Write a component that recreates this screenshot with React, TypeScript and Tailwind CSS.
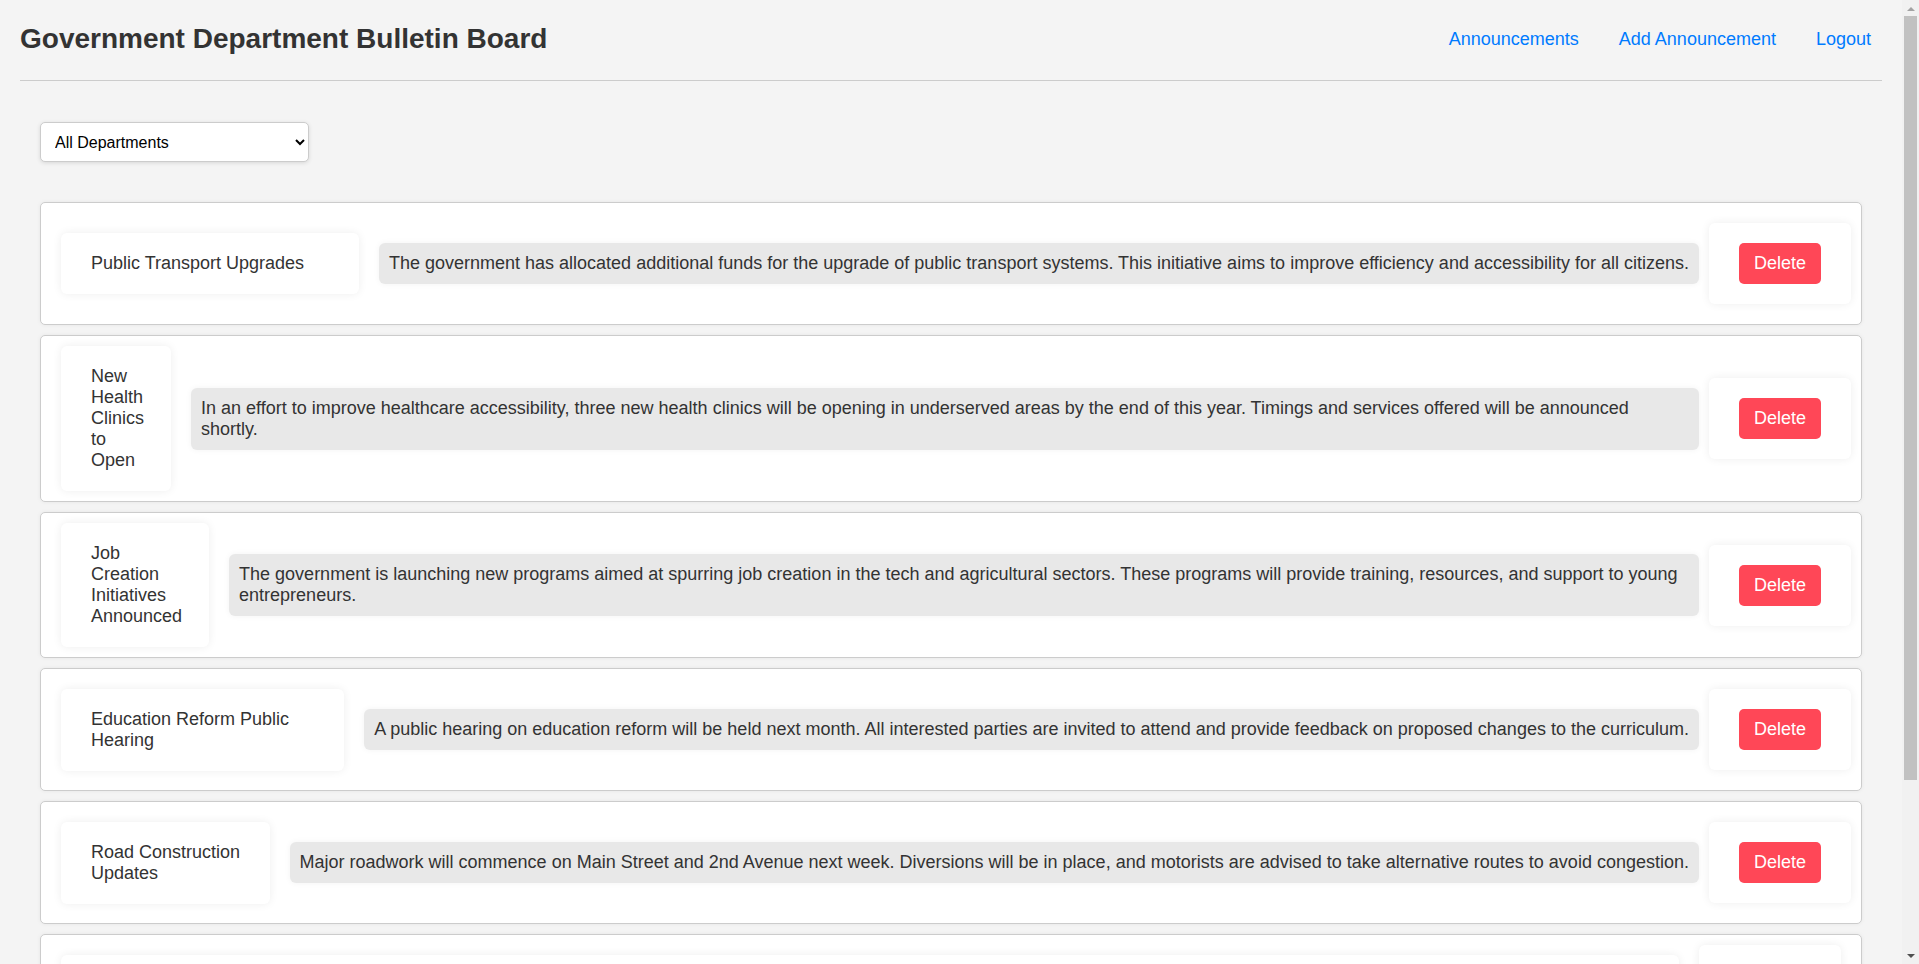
import React, { useState } from 'react';

interface Announcement {
  id: number;
  title: string;
  content: string;
  department: string;
}

const initialAnnouncements: Announcement[] = [
  {
    id: 1,
    title: 'Public Transport Upgrades',
    content:
      'The government has allocated additional funds for the upgrade of public transport systems. This initiative aims to improve efficiency and accessibility for all citizens.',
    department: 'Transport',
  },
  {
    id: 2,
    title: 'New Health Clinics to Open',
    content:
      'In an effort to improve healthcare accessibility, three new health clinics will be opening in underserved areas by the end of this year. Timings and services offered will be announced shortly.',
    department: 'Health',
  },
  {
    id: 3,
    title: 'Job Creation Initiatives Announced',
    content:
      'The government is launching new programs aimed at spurring job creation in the tech and agricultural sectors. These programs will provide training, resources, and support to young entrepreneurs.',
    department: 'Labour',
  },
  {
    id: 4,
    title: 'Education Reform Public Hearing',
    content:
      'A public hearing on education reform will be held next month. All interested parties are invited to attend and provide feedback on proposed changes to the curriculum.',
    department: 'Education',
  },
  {
    id: 5,
    title: 'Road Construction Updates',
    content:
      'Major roadwork will commence on Main Street and 2nd Avenue next week. Diversions will be in place, and motorists are advised to take alternative routes to avoid congestion.',
    department: 'Transport',
  },
];

export default function App() {
  const [announcements, setAnnouncements] = useState<Announcement[]>(initialAnnouncements);
  const [department, setDepartment] = useState('All');

  const handleDelete = (id: number) => {
    setAnnouncements((prev) => prev.filter((a) => a.id !== id));
  };

  const visible = announcements.filter((a) => department === 'All' || a.department === department);

  return (
    <div className="flex h-screen overflow-hidden bg-[#f4f4f4] font-['Liberation_Sans',Arial,sans-serif] text-[#333]">
      <div className="min-w-0 flex-1 overflow-y-auto">
        {/* Header */}
        <header className="mx-[20px] flex items-center justify-between border-b border-[#ccc] pt-[23px] pb-[25px]">
          <h1 className="text-[28px] font-bold leading-[32px] text-[#333]">Government Department Bulletin Board</h1>
          <nav className="flex items-center gap-[40px] pr-[11px] text-[18px] leading-[21px] text-[#007bff]">
            <a href="#">Announcements</a>
            <a href="#">Add Announcement</a>
            <a href="#">Logout</a>
          </nav>
        </header>

        <main className="px-[40px] pt-[41px] pb-[20px]">
          {/* Filter */}
          <select
            value={department}
            onChange={(e) => setDepartment(e.target.value)}
            className="h-[40px] w-[269px] rounded-[5px] border border-[#ccc] bg-white pl-[10px] text-[16px] text-black shadow-[0_1px_4px_rgba(0,0,0,0.12)]"
          >
            <option value="All">All Departments</option>
            <option value="Transport">Transport</option>
            <option value="Health">Health</option>
            <option value="Labour">Labour</option>
            <option value="Education">Education</option>
          </select>

          {/* Announcement list */}
          <div className="mt-[40px] flex flex-col gap-[10px] text-[18px] leading-[21px]">
            {visible.map((item) => (
              <div
                key={item.id}
                className="flex items-center rounded-[5px] border border-[#ccc] bg-white p-[10px] shadow-[0_0_4px_rgba(0,0,0,0.06)]"
              >
                <div className="mx-[10px] flex-1 rounded-[6px] bg-white py-[20px] pl-[30px] pr-[27px] shadow-[0_0_10px_rgba(0,0,0,0.07)]">
                  {item.title}
                </div>
                <div className="mx-[10px] rounded-[6px] bg-[#e8e8e8] p-[10px] shadow-[0_0_6px_rgba(0,0,0,0.05)]">
                  {item.content}
                </div>
                <div className="my-[10px] rounded-[6px] bg-white px-[30px] py-[20px] shadow-[0_0_10px_rgba(0,0,0,0.07)]">
                  <button
                    onClick={() => handleDelete(item.id)}
                    className="rounded-[5px] bg-[#ff4757] px-[15px] py-[10px] text-white"
                  >
                    Delete
                  </button>
                </div>
              </div>
            ))}

            {/* Longer entry, stacked */}
            <div className="flex items-start rounded-[5px] border border-[#ccc] bg-white p-[10px] shadow-[0_0_4px_rgba(0,0,0,0.06)]">
              <div className="mx-[10px] mt-[10px] flex flex-1 flex-col gap-[20px]">
                <div className="rounded-[6px] bg-white px-[30px] py-[20px] shadow-[0_0_10px_rgba(0,0,0,0.07)]">
                  Community Water Conservation Program
                </div>
                <div className="rounded-[6px] bg-[#e8e8e8] p-[10px] shadow-[0_0_6px_rgba(0,0,0,0.05)]">
                  Residents are encouraged to take part in the upcoming consultation sessions on the new water usage guidelines. Sessions will be held at the community centre every Saturday throughout the month.
                </div>
              </div>
              <div className="ml-[10px] mr-[10px] rounded-[6px] bg-white px-[30px] py-[20px] shadow-[0_0_10px_rgba(0,0,0,0.07)]">
                <button className="rounded-[5px] bg-[#ff4757] px-[15px] py-[10px] text-white">Delete</button>
              </div>
            </div>
          </div>
        </main>
      </div>

      {/* Window scrollbar */}
      <div className="flex w-[17px] shrink-0 flex-col bg-[#f1f1f1]">
        <div className="flex h-[16px] items-center justify-center">
          <svg width="8" height="5" viewBox="0 0 8 5">
            <path d="M0 5 L4 1 L8 5 Z" fill="#a3a3a3" />
          </svg>
        </div>
        <div className="mx-[2px] h-[764px] bg-[#c1c1c1]" />
        <div className="flex-1" />
        <div className="flex h-[16px] items-center justify-center">
          <svg width="8" height="5" viewBox="0 0 8 5">
            <path d="M0 0 L8 0 L4 4 Z" fill="#505050" />
          </svg>
        </div>
      </div>
    </div>
  );
}
